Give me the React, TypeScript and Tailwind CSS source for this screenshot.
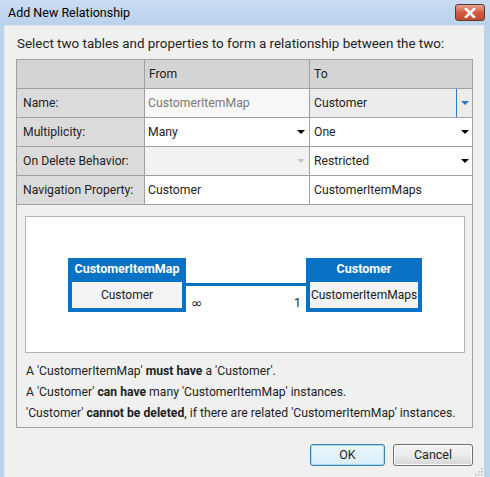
import React from 'react'

const font = "font-['Segoe_UI',Roboto,'Noto_Sans',sans-serif]"

function Arrow({ color = 'border-t-black' }: { color?: string }) {
  return (
    <span
      className={`inline-block w-0 h-0 border-l-[4px] border-r-[4px] border-t-[4px] border-l-transparent border-r-transparent ${color}`}
    />
  )
}

function Cell({
  children,
  className = '',
}: {
  children?: React.ReactNode
  className?: string
}) {
  return (
    <div className={`h-[29px] flex items-center border-b border-r border-[#a0a0a0] ${className}`}>
      {children}
    </div>
  )
}

function Entity({
  title,
  prop,
  width,
}: {
  title: string
  prop: string
  width: string
}) {
  return (
    <div className={`${width} h-[54px] bg-[#0a72c4] flex flex-col px-[4px] pb-[4px]`}>
      <div className="h-[24px] flex items-center justify-center text-white font-bold text-[12.5px]">
        {title}
      </div>
      <div className="flex-1 bg-[#f3f3f3] flex items-center justify-center text-[12px] text-[#1a1a1a] whitespace-nowrap">
        {prop}
      </div>
    </div>
  )
}

export default function App() {
  return (
    <div className={`w-[490px] h-[477px] overflow-hidden bg-[#bcd3ec] flex flex-col ${font} text-[12.2px] text-[#1e1e1e]`}>
      {/* title bar */}
      <div className="h-[25px] shrink-0 flex items-start justify-between bg-gradient-to-b from-[#c9dcf2] to-[#bad1eb]">
        <span className="pl-[8px] pt-[4px] text-[12.5px] text-black">Add New Relationship</span>
        <div className="mt-[4px] mr-[5px] w-[30px] h-[17px] rounded-[3px] border border-[#5b3a35] bg-gradient-to-b from-[#e8a493] via-[#cf5a42] to-[#c14a30] flex items-center justify-center">
          <svg width="12" height="10" viewBox="0 0 12 10">
            <path d="M2 1 L10 9 M10 1 L2 9" stroke="#ffffff" strokeWidth="2.6" strokeLinecap="square" />
          </svg>
        </div>
      </div>

      {/* client */}
      <div className="flex-1 ml-[4px] mr-[6px] bg-[#f0f0f0] border-t border-l border-[#dfe8f3] flex flex-col px-[11px] relative">
        <div className="pt-[9px] h-[33px] pl-[1px] shrink-0 text-[13.4px] leading-[18px] whitespace-nowrap">
          Select two tables and properties to form a relationship between the two:
        </div>

        <div className="border border-[#a0a0a0] flex flex-col shrink-0">
          {/* property grid */}
          <div className="grid grid-cols-[128px_165px_1fr]">
            <Cell className="bg-[#d4d4d4]" />
            <Cell className="bg-[#d4d4d4] pl-[4px]">From</Cell>
            <Cell className="bg-[#d4d4d4] pl-[4px] border-r-0">To</Cell>

            <Cell className="bg-[#dbdbdb] pl-[6px]">Name:</Cell>
            <Cell className="bg-[#f7f7f7] pl-[3px] text-[#7a7a7a]">CustomerItemMap</Cell>
            <Cell className="bg-[#ececec] pl-[4px] border-r-0 justify-between">
              <span>Customer</span>
              <span className="h-full flex items-center">
                <span className="w-px h-full bg-[#2f78c4]" />
                <span className="w-[15px] flex justify-center">
                  <Arrow color="border-t-[#2f78c4]" />
                </span>
              </span>
            </Cell>

            <Cell className="bg-[#dbdbdb] pl-[6px]">Multiplicity:</Cell>
            <Cell className="bg-white pl-[3px] justify-between">
              <span>Many</span>
              <span className="w-[15px] flex justify-center mr-[1px]">
                <Arrow />
              </span>
            </Cell>
            <Cell className="bg-white pl-[4px] border-r-0 justify-between">
              <span>One</span>
              <span className="w-[15px] flex justify-center">
                <Arrow />
              </span>
            </Cell>

            <Cell className="bg-[#dbdbdb] pl-[6px]">On Delete Behavior:</Cell>
            <Cell className="bg-[#f2f2f2] justify-end">
              <span className="w-[15px] flex justify-center mr-[1px]">
                <Arrow color="border-t-[#c4c4c4]" />
              </span>
            </Cell>
            <Cell className="bg-white pl-[4px] border-r-0 justify-between">
              <span>Restricted</span>
              <span className="w-[15px] flex justify-center">
                <Arrow />
              </span>
            </Cell>

            <Cell className="bg-[#dbdbdb] pl-[6px]">Navigation Property:</Cell>
            <Cell className="bg-white pl-[3px]">Customer</Cell>
            <Cell className="bg-white pl-[4px] border-r-0">CustomerItemMaps</Cell>
          </div>

          {/* diagram */}
          <div className="mt-[11px] ml-[8px] mr-[7px] h-[137px] bg-white border border-[#b4b4b4] flex items-center justify-center">
            <Entity title="CustomerItemMap" prop="Customer" width="w-[118px]" />
            <div className="w-[120px] h-[54px] flex flex-col">
              <div className="mt-[25px] h-[3px] bg-[#0a72c4]" />
              <div className="mt-[10px] flex justify-between items-end pl-[5px] pr-[5px] text-[12.5px] leading-none">
                <span className="font-['DejaVu_Sans',sans-serif] text-[14px] leading-none">∞</span>
                <span>1</span>
              </div>
            </div>
            <Entity title="Customer" prop="CustomerItemMaps" width="w-[116px]" />
          </div>

          {/* summary */}
          <div className="pl-[9px] pt-[8px] pb-[3px] flex flex-col leading-[21px] whitespace-nowrap">
            <div>
              A 'CustomerItemMap' <b>must have</b> a 'Customer'.
            </div>
            <div>
              A 'Customer' <b>can have</b> many 'CustomerItemMap' instances.
            </div>
            <div>
              'Customer' <b>cannot be deleted</b>, if there are related 'CustomerItemMap' instances.
            </div>
          </div>
        </div>

        {/* buttons */}
        <div className="mt-[16px] flex justify-end gap-[8px]">
          <button className="w-[75px] h-[22px] rounded-[3px] border border-[#3c7fb1] bg-gradient-to-b from-[#eaf6fd] to-[#d9eefa] shadow-[inset_0_0_0_1px_#a6dcf5] text-[12.5px]">
            OK
          </button>
          <button className="w-[80px] h-[22px] rounded-[3px] border border-[#707070] bg-gradient-to-b from-[#f2f2f2] via-[#ebebeb] to-[#d6d6d6] shadow-[inset_0_0_0_1px_#fcfcfc] text-[12.5px]">
            Cancel
          </button>
        </div>

        {/* resize grip */}
        <svg className="absolute right-[1px] bottom-[1px]" width="10" height="10" viewBox="0 0 10 10">
          {[
            [8, 2], [8, 5], [8, 8], [5, 5], [5, 8], [2, 8],
          ].map(([x, y]) => (
            <rect key={`${x}-${y}`} x={x} y={y} width="1.5" height="1.5" fill="#b8b8b8" />
          ))}
        </svg>
      </div>
    </div>
  )
}
